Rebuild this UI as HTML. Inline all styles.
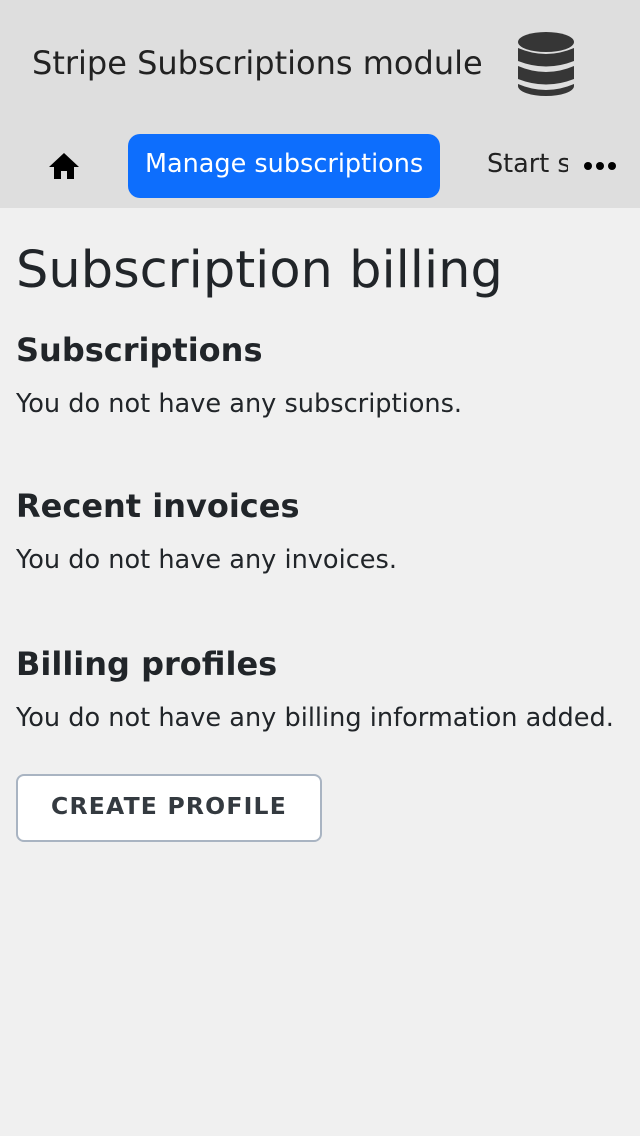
<!DOCTYPE html>
<html><head><meta charset="utf-8"><style>
*{margin:0;padding:0;box-sizing:border-box}
body{width:640px;height:1136px;background:#f0f0f0;font-family:"DejaVu Sans","Liberation Sans",sans-serif;color:#212529;position:relative;overflow:hidden}
.a{position:absolute;line-height:1;white-space:nowrap}
#hdr{position:absolute;left:0;top:0;width:640px;height:208px;background:#dedede}
</style></head><body>
<div id="hdr"></div>
<div class="a" style="left:32px;top:47px;font-size:32px;color:#222">Stripe Subscriptions module</div>
<svg class="a" style="left:518px;top:32px" width="56" height="64" viewBox="0 0 56 64">
<g fill="#363636">
<ellipse cx="28" cy="10" rx="28" ry="10"/>
<path d="M0 16 Q28 28 56 16 V29 Q28 40 0 29Z"/>
<path d="M0 34 Q28 46 56 34 V47 Q28 58 0 47Z"/>
<path d="M0 52 Q28 64 56 52 V54 A28 10 0 0 1 0 54Z"/>
</g></svg>
<svg class="a" style="left:48px;top:152px" width="32" height="28" viewBox="0 0 32 28"><path d="M16 1 L1 15 H6 V27 H13 V19 H19 V27 H26 V15 H31Z" fill="#000"/></svg>
<div class="a" style="left:128px;top:134px;width:312px;height:64px;background:#0d6efd;border-radius:12px"></div>
<div class="a" style="left:145px;top:152px;font-size:25.5px;color:#fff">Manage subscriptions</div>
<div class="a" style="left:487px;top:152px;font-size:25.5px;width:81px;overflow:hidden;color:#222">Start subscription</div>
<div class="a" style="left:584px;top:162px;width:32px;height:10px">
<span style="position:absolute;left:0;top:0;width:8px;height:8px;border-radius:50%;background:#000"></span>
<span style="position:absolute;left:12px;top:0;width:8px;height:8px;border-radius:50%;background:#000"></span>
<span style="position:absolute;left:24px;top:0;width:8px;height:8px;border-radius:50%;background:#000"></span>
</div>
<div class="a" style="left:16px;top:245px;font-size:51px">Subscription billing</div>
<div class="a" style="left:16px;top:334px;font-size:32px;font-weight:bold">Subscriptions</div>
<div class="a" style="left:16px;top:392px;font-size:25.6px">You do not have any subscriptions.</div>
<div class="a" style="left:16px;top:490px;font-size:32px;font-weight:bold">Recent invoices</div>
<div class="a" style="left:16px;top:548px;font-size:25.6px">You do not have any invoices.</div>
<div class="a" style="left:16px;top:648px;font-size:32px;font-weight:bold">Billing profiles</div>
<div class="a" style="left:16px;top:706px;font-size:25.6px">You do not have any billing information added.</div>
<div class="a" style="left:16px;top:774px;width:306px;height:68px;background:#fff;border:2px solid #a9b4c2;border-radius:8px"></div>
<div class="a" style="left:16px;top:795px;width:306px;text-align:center;font-size:23.5px;font-weight:bold;letter-spacing:1.2px;color:#343a40">CREATE PROFILE</div>
</body></html>
